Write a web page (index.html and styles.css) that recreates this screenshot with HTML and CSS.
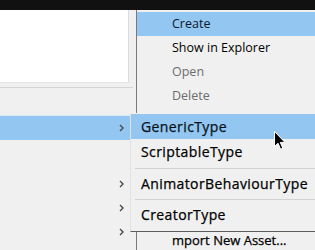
FILE: index.html
```html
<!DOCTYPE html>
<html lang="en">

<head>
    <meta charset="UTF-8">
    <title>Create menu</title>
    <link rel="stylesheet" href="styles.css">
</head>

<body>
    <div class="titlebar"></div>

    <div class="panel">
        <div class="panel-view"></div>
        <div class="panel-divider"></div>
        <div class="panel-list">
            <div class="panel-row active"><svg class="chev" viewBox="0 0 5 8"><polyline points="1,1 4,4 1,7" /></svg></div>
            <div class="panel-gap"></div>
            <div class="panel-row"><svg class="chev" viewBox="0 0 5 8"><polyline points="1,1 4,4 1,7" /></svg></div>
            <div class="panel-row"><svg class="chev" viewBox="0 0 5 8"><polyline points="1,1 4,4 1,7" /></svg></div>
            <div class="panel-row"><svg class="chev" viewBox="0 0 5 8"><polyline points="1,1 4,4 1,7" /></svg></div>
        </div>
    </div>

    <!-- main context menu -->
    <div class="menu main-menu">
        <div class="menu-item selected">Create</div>
        <div class="menu-item">Show in Explorer</div>
        <div class="menu-item disabled">Open</div>
        <div class="menu-item disabled">Delete</div>
        <!-- items hidden under the submenu -->
        <div class="menu-hidden"></div>
        <div class="menu-item strong">mport New Asset...</div>
    </div>

    <!-- Create submenu -->
    <div class="menu sub-menu">
        <div class="menu-item selected">GenericType</div>
        <div class="menu-item tall">ScriptableType</div>
        <div class="menu-sep"></div>
        <div class="menu-item">AnimatorBehaviourType</div>
        <div class="menu-sep"></div>
        <div class="menu-item">CreatorType</div>
    </div>

    <svg class="cursor" viewBox="0 0 12 19">
        <path d="M0.5,0.5 L0.5,15.5 L4,12.2 L6.6,18.2 L8.8,17.2 L6.3,11.4 L11,11.4 Z" />
    </svg>
</body>

</html>
```

FILE: styles.css
```css
* {
    margin: 0;
    padding: 0;
    box-sizing: border-box;
}

body {
    width: 315px;
    height: 250px;
    overflow: hidden;
    background-color: #f0f0f0;
    font-family: "Open Sans", "Noto Sans", sans-serif;
    font-size: 12.5px;
    color: #000;
    position: relative;
}

.titlebar {
    height: 10px;
    background-color: #111;
}

.panel {
    width: 136px;
}

.panel-view {
    width: 129px;
    height: 73px;
    background-color: #fff;
    border-right: 1px solid #dcdcdc;
    border-bottom: 1px solid #e4e4e4;
}

.panel-divider {
    width: 133px;
    height: 1px;
    margin-top: 4px;
    background-color: #d4d4d4;
}

.panel-list {
    padding-top: 27px;
}

.panel-row {
    height: 24px;
    display: flex;
    align-items: center;
    justify-content: flex-end;
    padding-right: 12px;
}

.panel-row.active {
    height: 25px;
    background-color: #93c6f1;
    border-top: 1px solid #d6e9f9;
}

.panel-gap {
    height: 32px;
}

.chev {
    width: 5px;
    height: 8px;
    fill: none;
    stroke: #4a4a4a;
    stroke-width: 1.4;
}

.menu {
    position: absolute;
    background-color: #f0f0f0;
}

.main-menu {
    left: 136px;
    top: 10px;
    width: 200px;
    padding-top: 2px;
    border-left: 1px solid #7a7a7a;
}

.main-menu .menu-item {
    padding-left: 35px;
}

.menu-hidden {
    height: 120px;
}

.sub-menu {
    left: 130px;
    top: 113px;
    width: 200px;
    height: 119px;
    padding-top: 1px;
    border-left: 1px solid #e2e2e2;
    border-bottom: 1px solid #5c5c5c;
}

.sub-menu .menu-item {
    padding-left: 10px;
    font-size: 14px;
    letter-spacing: 0.4px;
    color: #000;
    -webkit-text-stroke: 0.25px #000;
}

.menu-item {
    height: 24px;
    line-height: 24px;
    white-space: nowrap;
}

.sub-menu .menu-item.tall {
    height: 26px;
    line-height: 26px;
}

.menu-item.strong {
    font-size: 13px;
    -webkit-text-stroke: 0.25px #000;
}

.sub-menu .menu-item.selected {
    height: 25px;
    line-height: 25px;
    color: #0b1a2a;
}

.menu-item.selected {
    background-color: #93c6f1;
    color: #0b1a2a;
}

.menu-item.disabled {
    color: #6d6d6d;
}

.menu-sep {
    height: 1px;
    margin: 3px 0 3px 4px;
    background-color: #d2d2d2;
}

.cursor {
    position: absolute;
    left: 274px;
    top: 131px;
    width: 12px;
    height: 19px;
    fill: #000;
    stroke: #fff;
    stroke-width: 1;
}
```
